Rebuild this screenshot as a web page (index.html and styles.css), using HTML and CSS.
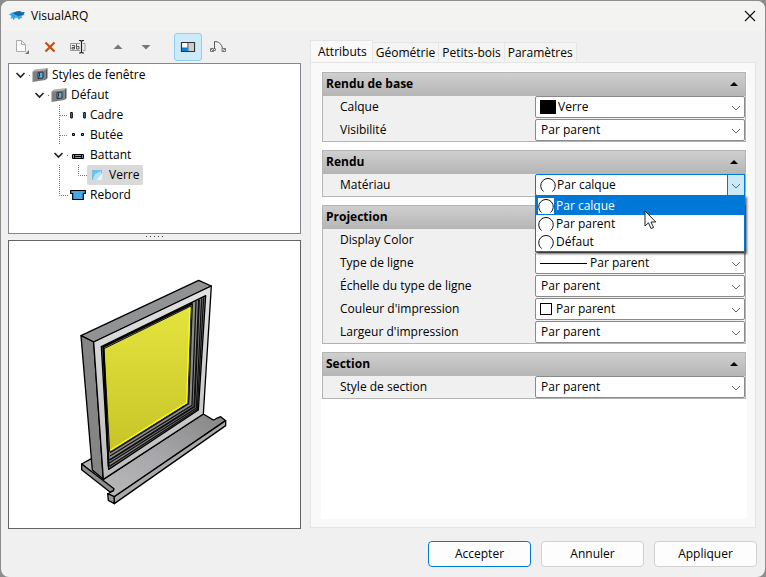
FILE: index.html
```
<!DOCTYPE html>
<html lang="fr">
<head>
  <meta charset="UTF-8">
  <meta name="viewport" content="width=device-width, initial-scale=1.0">
  <title>VisualARQ</title>
  <link rel="stylesheet" href="styles.css">
</head>
<body>

  <svg class="defs" aria-hidden="true">
    <defs>
      <!-- tree guides, one 19x20 cell each -->
      <symbol id="guide-line" viewBox="0 0 19 20">
        <path class="dots" d="M10.500 0V20"/>
      </symbol>
      <symbol id="guide-tee" viewBox="0 0 19 20">
        <path class="dots" d="M10.500 0V20M11 10.500H20"/>
      </symbol>
      <symbol id="guide-end" viewBox="0 0 19 20">
        <path class="dots" d="M10.500 0V10.500H19"/>
      </symbol>
      <symbol id="guide-open" viewBox="0 0 19 20">
        <path class="dots" d="M18 10.500h1"/>
        <path d="M5.500 8L9.500 12L13.500 8" fill="none" stroke="#222" stroke-width="1.600"/>
      </symbol>
      <symbol id="window-icon" viewBox="0 0 16 16">
        <path d="M.500 4.500L2.500 2.500L15.500 1L13.500 3Z" fill="#b0b0b0"/>
        <path d="M.500 4.500L13.500 3V13L.500 15Z" fill="#808080"/>
        <path d="M13.500 3L15.500 1V11L13.500 13Z" fill="#555"/>
        <path d="M6 5.500L11 5V11L6 11.700Z" fill="#4fb0ec" stroke="#333"/>
        <path d="M7.500 6V9.500L6.500 11" fill="none" stroke="#333"/>
      </symbol>
      <symbol id="chevron" viewBox="0 0 16 20">
        <path d="M4 9L8 13L12 9" fill="none" stroke="#666"/>
      </symbol>
      <symbol id="collapse" viewBox="0 0 10 10">
        <path d="M1 7L5 3L9 7Z"/>
      </symbol>
      <symbol id="ball" viewBox="0 0 16 16">
        <path d="M3.500 14.500A7.300 7.300 0 1 1 12.500 14.500" fill="#fff" stroke="#111"/>
      </symbol>
    </defs>
  </svg>

  <div class="window">
    <header class="titlebar">
      <svg class="logo" viewBox="0 0 16 12">
        <path d="M0 4.500L3 2.500L7 2L11 1L13 2L15.500 2L15 5L12.500 6L13 8L11 8.500L10 10L8.500 8L7 7.500L5.500 8.500L4.500 10.500L3.500 8L1.500 9L2.500 6Z" fill="#38a5e6"/>
        <path d="M4 3L7 1.500L11 1L12 2.500L15.500 2L14 5L9 6L6 4.500Z" fill="#1567a8"/>
      </svg>
      <h1>VisualARQ</h1>
      <button class="close" type="button" aria-label="Fermer">
        <svg viewBox="0 0 12 12"><path d="M1 1L11 11M11 1L1 11" stroke="#111" stroke-width="1.100"/></svg>
      </button>
    </header>

    <main class="content">
      <section class="left">
        <div class="toolbar">
          <button type="button" aria-label="Nouveau">
            <svg viewBox="0 0 16 16">
              <path d="M2.500 1.500H7.500L11.500 5.500V12.500H2.500ZM7.500 1.500V5.500H11.500" fill="#f8f8f8" stroke="#aaa"/>
              <path d="M15 11V15H11Z" fill="#777"/>
            </svg>
          </button>
          <button type="button" aria-label="Supprimer">
            <svg viewBox="0 0 16 16"><path d="M3.500 3.500L12.500 12.500M12.500 3.500L3.500 12.500" stroke="#c4500c" stroke-width="2.200"/></svg>
          </button>
          <button type="button" aria-label="Renommer">
            <svg viewBox="0 0 16 16">
              <path d="M10 4.500H.500V11.500H10M13 4.500H15V11.500H13" fill="none" stroke="#999"/>
              <path d="M2 6.500H4.500V10H2V8.500H4.500M6.500 5V10H9V7.500H6.500" fill="none" stroke="#555"/>
              <path d="M9 1.500H10.500L11.500 2.500L12.500 1.500H14M11.500 2.500V13M9 14H10.500L11.500 13L12.500 14H14" fill="none" stroke="#222" stroke-width="1.200"/>
            </svg>
          </button>
          <button class="spaced" type="button" aria-label="Monter">
            <svg viewBox="0 0 16 16"><path d="M3.500 10L8 5.500L12.500 10Z" fill="#777"/></svg>
          </button>
          <button type="button" aria-label="Descendre">
            <svg viewBox="0 0 16 16"><path d="M3.500 6L8 10.500L12.500 6Z" fill="#777"/></svg>
          </button>
          <button class="active" type="button" aria-label="Vue en plan">
            <svg viewBox="0 0 16 16">
              <path d="M1.500 3.500H14.500V12.500H1.500Z" fill="#fff" stroke="#333" stroke-width="1.200"/>
              <path d="M2 8.500H7.500V12H2Z" fill="#0d7fd1"/>
              <path d="M9 4H14V12H9Z" fill="#ccc"/>
              <path d="M8 3.500V12.500" stroke="#333"/>
            </svg>
          </button>
          <button type="button" aria-label="Ouverture">
            <svg viewBox="0 0 16 16">
              <path d="M4.500 10V2.500C8 2.500 12 4.500 12.500 10" fill="none" stroke="#555"/>
              <path d="M.500 9.500H3.500V12.500H.500ZM12 9.500H15.500V12.500H12ZM3.500 11.500H5.500V9.500M.500 9.500L3.500 12.500M12 12.500L15.500 9.500" fill="none" stroke="#777"/>
            </svg>
          </button>
        </div>

        <ul class="tree" role="tree">
          <li role="treeitem" aria-level="1" aria-expanded="true">
            <svg class="guide"><use href="#guide-open"/></svg>
            <span class="node"><svg class="icon"><use href="#window-icon"/></svg>Styles de fenêtre</span>
          </li>
          <li role="treeitem" aria-level="2" aria-expanded="true">
            <i class="guide"></i>
            <svg class="guide"><use href="#guide-open"/></svg>
            <span class="node"><svg class="icon"><use href="#window-icon"/></svg>Défaut</span>
          </li>
          <li role="treeitem" aria-level="3">
            <i class="guide"></i><i class="guide"></i>
            <svg class="guide"><use href="#guide-tee"/></svg>
            <span class="node">
              <svg class="icon" viewBox="0 0 16 16"><path d="M.700 5.500H2.300V11H.700ZM13.700 5.500H15.300V11H13.700Z" fill="#4aa8e0" stroke="#000"/></svg>Cadre
            </span>
          </li>
          <li role="treeitem" aria-level="3">
            <i class="guide"></i><i class="guide"></i>
            <svg class="guide"><use href="#guide-tee"/></svg>
            <span class="node">
              <svg class="icon" viewBox="0 0 16 16"><path d="M2.500 6.500H4.500V8.500H2.500ZM11.500 6.500H13.500V8.500H11.500Z" fill="#4aa8e0" stroke="#000"/></svg>Butée
            </span>
          </li>
          <li role="treeitem" aria-level="3" aria-expanded="true">
            <i class="guide"></i><i class="guide"></i>
            <svg class="guide"><use href="#guide-open"/></svg>
            <span class="node">
              <svg class="icon" viewBox="0 0 16 16"><path d="M2.500 7.500H13.500V11.500H2.500ZM4.500 7.500V11.500M11.500 7.500V11.500M4.500 9.500H11.500" fill="#4aa8e0" stroke="#000"/></svg>Battant
            </span>
          </li>
          <li role="treeitem" aria-level="4" aria-selected="true">
            <i class="guide"></i><i class="guide"></i>
            <svg class="guide"><use href="#guide-line"/></svg>
            <svg class="guide"><use href="#guide-end"/></svg>
            <span class="node">
              <svg class="icon" viewBox="0 0 16 16">
                <path d="M3 3H13V13H3Z" fill="#6cc0ec"/>
                <path d="M4 12L6 7L12 4V7L7 13H4Z" fill="#b4e0f6"/>
                <path d="M7 13L13 6V13Z" fill="#e4f4fc"/>
              </svg>Verre
            </span>
          </li>
          <li role="treeitem" aria-level="3">
            <i class="guide"></i><i class="guide"></i>
            <svg class="guide"><use href="#guide-end"/></svg>
            <span class="node">
              <svg class="icon" viewBox="0 0 16 16"><path d="M.700 3.500H15.300V6.500H13.300V12.500H2.700V6.500H.700Z" fill="#4aa8e0" stroke="#000" stroke-width="1.200"/></svg>Rebord
            </span>
          </li>
        </ul>

        <div class="splitter"><i></i></div>

        <div class="preview">
          <svg viewBox="-153 33 873 861" role="img" aria-label="Aperçu de la fenêtre">
            <defs>
              <linearGradient id="glass" x1="0" y1="0" x2="0" y2="1">
                <stop offset="0" stop-color="#e4e43e"/><stop offset="1" stop-color="#c8c428"/>
              </linearGradient>
              <linearGradient id="front" x1="0" y1="0" x2="0" y2="1">
                <stop offset="0" stop-color="#e2e2e2"/><stop offset="1" stop-color="#bcbcbc"/>
              </linearGradient>
              <linearGradient id="sill" x1="0" y1="1" x2="1" y2="0">
                <stop offset="0" stop-color="#bcbcbc"/><stop offset=".5" stop-color="#a8a8ac"/><stop offset="1" stop-color="#858585"/>
              </linearGradient>
            </defs>
            <g stroke="#000" stroke-width="4" stroke-linejoin="round">
              <!-- sill -->
              <path d="M65 702L94 686L130 748L430 552L458 569Q464 571 468 566L482 560L497 572L163 802L143 792L160 782Z" fill="url(#sill)"/>
              <path d="M65 702L162 776L160 782L150 786L65 719Z" fill="#8d8d8d"/>
              <path d="M143 791L163 800V821L145 811Z" fill="#999"/>
              <path d="M163 800L497 572V587L163 821Z" fill="#aaa"/>
              <!-- frame -->
              <path d="M63 317L416 151L454 168L101 336Z" fill="#909294"/>
              <path d="M63 317L101 336L130 748L97 720Z" fill="#858585"/>
              <path d="M101 336L454 168L430 552L130 748Z" fill="url(#front)"/>
              <path d="M124 350L437 197L415 540L146 718Z" fill="#8c8c8c"/>
            </g>
            <!-- sash rails -->
            <g fill="none" stroke="#111" stroke-width="4">
              <path d="M397 220L386 521L150 668"/>
              <path d="M408 214L396 526L150 678"/>
              <path d="M417 209L403 530L149 690" stroke-width="6"/>
              <path d="M425 205L409 534L148 699"/>
              <path d="M431 202L412 538L148 709"/>
            </g>
            <path d="M132 356L393 228L383 520L149 665Z" fill="url(#glass)" stroke="#111" stroke-width="3"/>
            <path d="M390 232L380 518L151 661" fill="none" stroke="#ff0" stroke-width="4"/>
            <path d="M127 352L397 221M130 352L146 710" fill="none" stroke="#000" stroke-width="6"/>
          </svg>
        </div>
      </section>

      <section class="right">
        <div class="tabs" role="tablist">
          <button class="selected" type="button" role="tab" aria-selected="true">Attributs</button>
          <button type="button" role="tab">Géométrie</button>
          <button type="button" role="tab">Petits-bois</button>
          <button type="button" role="tab">Paramètres</button>
        </div>

        <div class="panel">
          <div class="groups">
            <section class="group">
              <h2>Rendu de base <svg><use href="#collapse"/></svg></h2>
              <div class="row">
                <label for="layer">Calque</label>
                <div class="combo">
                  <i class="swatch black"></i>
                  <select id="layer"><option>Verre</option></select>
                  <svg class="arrow"><use href="#chevron"/></svg>
                </div>
              </div>
              <div class="row">
                <label for="visibility">Visibilité</label>
                <div class="combo">
                  <select id="visibility"><option>Par parent</option></select>
                  <svg class="arrow"><use href="#chevron"/></svg>
                </div>
              </div>
            </section>

            <section class="group">
              <h2>Rendu <svg><use href="#collapse"/></svg></h2>
              <div class="row">
                <label for="material">Matériau</label>
                <div class="combo open">
                  <svg class="ball"><use href="#ball"/></svg>
                  <select id="material"><option>Par calque</option><option>Par parent</option><option>Défaut</option></select>
                  <svg class="arrow"><use href="#chevron"/></svg>
                  <ul class="menu" role="listbox">
                    <li class="current" role="option" aria-selected="true"><svg class="ball"><use href="#ball"/></svg>Par calque</li>
                    <li role="option"><svg class="ball"><use href="#ball"/></svg>Par parent</li>
                    <li role="option"><svg class="ball"><use href="#ball"/></svg>Défaut</li>
                  </ul>
                  <svg class="cursor" viewBox="0 0 13 20">
                    <path d="M1 1V16L4.500 12.800L7 18.500L9.500 17.400L7 12H11.800Z" fill="#fff" stroke="#222"/>
                  </svg>
                </div>
              </div>
            </section>

            <section class="group">
              <h2>Projection <svg><use href="#collapse"/></svg></h2>
              <div class="row">
                <label for="color">Display Color</label>
                <div class="combo">
                  <select id="color"><option></option></select>
                  <svg class="arrow"><use href="#chevron"/></svg>
                </div>
              </div>
              <div class="row">
                <label for="linetype">Type de ligne</label>
                <div class="combo">
                  <i class="line"></i>
                  <select id="linetype"><option>Par parent</option></select>
                  <svg class="arrow"><use href="#chevron"/></svg>
                </div>
              </div>
              <div class="row">
                <label for="scale">Échelle du type de ligne</label>
                <div class="combo">
                  <select id="scale"><option>Par parent</option></select>
                  <svg class="arrow"><use href="#chevron"/></svg>
                </div>
              </div>
              <div class="row">
                <label for="printcolor">Couleur d'impression</label>
                <div class="combo">
                  <i class="swatch"></i>
                  <select id="printcolor"><option>Par parent</option></select>
                  <svg class="arrow"><use href="#chevron"/></svg>
                </div>
              </div>
              <div class="row">
                <label for="printwidth">Largeur d'impression</label>
                <div class="combo">
                  <select id="printwidth"><option>Par parent</option></select>
                  <svg class="arrow"><use href="#chevron"/></svg>
                </div>
              </div>
            </section>

            <section class="group">
              <h2>Section <svg><use href="#collapse"/></svg></h2>
              <div class="row">
                <label for="sectionstyle">Style de section</label>
                <div class="combo">
                  <select id="sectionstyle"><option>Par parent</option></select>
                  <svg class="arrow"><use href="#chevron"/></svg>
                </div>
              </div>
            </section>
          </div>
        </div>
      </section>
    </main>

    <footer class="buttons">
      <button class="default" type="button">Accepter</button>
      <button type="button">Annuler</button>
      <button type="button">Appliquer</button>
    </footer>
  </div>

</body>
</html>
```
FILE: styles.css
```
* {
  box-sizing: border-box;
}

body {
  margin: 0;
  min-height: 100vh;
  padding: 1px;
  display: flex;
  background: #8c8c8c;
  color: #000;
  font-family: "Open Sans", "Noto Sans", sans-serif;
  font-size: 12px;
  line-height: 20px;
}

button,
select {
  font: inherit;
  color: inherit;
}

ul {
  list-style: none;
  margin: 0;
  padding: 0;
}

.defs {
  position: absolute;
  width: 0;
  height: 0;
}

.dots {
  fill: none;
  stroke: #777;
  stroke-dasharray: 1 1;
}

.window {
  flex: 1;
  min-width: 0;
  display: flex;
  flex-direction: column;
  background: #f0f0f0;
  border-radius: 8px;
  overflow: hidden;
}

/* title bar */
.titlebar {
  display: flex;
  align-items: center;
  height: 30px;
  padding: 0 7px 0 8px;
  background: #f3f3f1;
}

.logo {
  width: 16px;
  height: 12px;
}

.titlebar h1 {
  flex: 1;
  margin: 0 0 0 6px;
  font-size: 12px;
  font-weight: normal;
}

.close {
  width: 16px;
  height: 16px;
  padding: 2px;
  border: 0;
  background: none;
}

.close svg {
  display: block;
}

.content {
  flex: 1;
  display: flex;
  gap: 9px;
  padding: 0 9px 0 7px;
}

/* left side */
.left {
  flex: 0 0 293px;
  display: flex;
  flex-direction: column;
}

.toolbar {
  display: flex;
  align-items: center;
  height: 32px;
}

.toolbar button {
  width: 28px;
  height: 28px;
  padding: 5px;
  border: 1px solid transparent;
  border-radius: 3px;
  background: none;
}

.toolbar .spaced {
  margin-left: 12px;
}

.toolbar .active {
  margin: 0 2px 0 14px;
  background: #cceaf8;
  border-color: #90cdf0;
}

.toolbar svg {
  display: block;
  width: 16px;
  height: 16px;
}

.tree {
  height: 171px;
  padding: 1px 2px;
  background: #fff;
  border: 1px solid #828790;
}

.tree li {
  display: flex;
  height: 20px;
}

.guide {
  flex: none;
  width: 19px;
  height: 20px;
}

.node {
  display: flex;
  align-items: center;
  gap: 4px;
  padding: 0 4px 0 2px;
  border-radius: 2px;
}

.tree [aria-selected="true"] .node {
  background: #d9d9d9;
}

.icon {
  width: 16px;
  height: 16px;
}

.splitter {
  display: flex;
  align-items: center;
  justify-content: center;
  height: 6px;
}

.splitter i {
  width: 17px;
  height: 2px;
  background: repeating-linear-gradient(to right, #333 0 1px, transparent 1px 4px) no-repeat 0 0 / 100% 1px;
}

.preview {
  flex: 1;
  display: flex;
  background: #fff;
  border: 1px solid #646464;
}

.preview svg {
  width: 100%;
}

/* right side */
.right {
  flex: 1;
  min-width: 0;
  display: flex;
  flex-direction: column;
  padding-bottom: 1px;
}

.tabs {
  display: flex;
  align-items: flex-end;
  height: 31px;
}

.tabs button {
  height: 20px;
  padding: 0 3px;
  border: 1px solid #e5e5e5;
  border-width: 1px 1px 0 0;
  background: #f4f4f2;
  line-height: 18px;
}

.tabs .selected {
  height: 23px;
  margin-bottom: -1px;
  padding: 0 5px 0 7px;
  border-left-width: 1px;
  background: #f9f9f9;
}

.panel {
  flex: 1;
  display: flex;
  padding: 8px;
  padding-left: 10px;
  background: #f9f9f9;
  border: 1px solid #e5e5e5;
}

.groups {
  flex: 1;
  display: flex;
  flex-direction: column;
  gap: 8px;
  padding: 1px;
  background: #fff;
}

.group {
  border: 1px solid #b4b4b4;
  border-top: 0;
  background: #f0f0f0;
}

.group h2 {
  display: flex;
  align-items: center;
  justify-content: space-between;
  height: 24px;
  margin: 0;
  padding: 0 6px 1px 3px;
  border-top: 1px solid #b4b4b4;
  background: linear-gradient(#cfcfcf, #b5b5b5);
  font-size: 12px;
}

.group h2 svg {
  width: 10px;
  height: 10px;
}

.row {
  display: grid;
  grid-template-columns: 1fr 1fr;
  height: 23px;
}

.row:last-child {
  height: 22px;
}

.row label {
  padding-left: 17px;
  line-height: 22px;
}

.combo {
  position: relative;
  display: flex;
  align-items: center;
  height: 22px;
  margin-left: 1px;
  padding-left: 4px;
  background: #fff;
  border: 1px solid #8a8a8a;
  border-radius: 2px;
}

.combo select {
  flex: 1;
  min-width: 0;
  height: 20px;
  padding: 0 1px;
  border: 0;
  background: none;
  appearance: none;
  outline: none;
}

.arrow {
  flex: none;
  width: 16px;
  height: 20px;
}

.swatch {
  width: 12px;
  height: 12px;
  margin-right: 3px;
  border: 1px solid #000;
}

.black {
  width: 16px;
  height: 14px;
  margin-right: 1px;
  background: #000;
}

.line {
  width: 47px;
  margin-right: 2px;
  border-top: 1px solid #000;
}

.ball {
  flex: none;
  width: 16px;
  height: 16px;
  background: #fff;
}

.open {
  border-color: #0078d4;
}

.open .arrow {
  background: #cceaf6;
  outline: 1px solid #0078d4;
}

.menu {
  position: absolute;
  z-index: 1;
  top: 20px;
  left: -1px;
  right: -1px;
  background: #fff;
  border: 1px solid #0078d7;
  box-shadow: 2px 2px 2px rgba(0, 0, 0, 0.6);
}

.menu li {
  display: flex;
  align-items: center;
  gap: 2px;
  height: 18px;
  padding-left: 2px;
}

.menu .current {
  height: 19px;
  background: #0078d7;
  color: #fff;
}

.cursor {
  position: absolute;
  z-index: 2;
  top: 35px;
  left: 108px;
  width: 13px;
  height: 20px;
}

/* bottom buttons */
.buttons {
  display: flex;
  justify-content: flex-end;
  gap: 10px;
  padding: 12px 8px 10px;
}

.buttons button {
  width: 103px;
  height: 26px;
  padding: 0;
  background: #fdfdfd;
  border: 1px solid #d0d0d0;
  border-radius: 4px;
}

.buttons .default {
  border-color: #0078d4;
}
```
